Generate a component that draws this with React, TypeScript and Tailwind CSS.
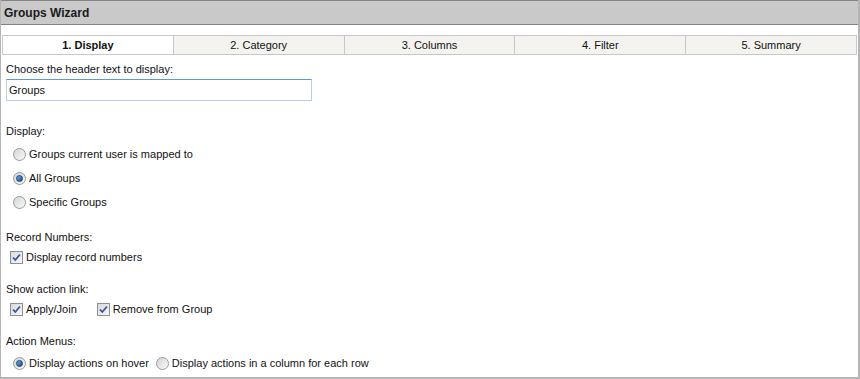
import React from "react"

const tabs = ["1. Display", "2. Category", "3. Columns", "4. Filter", "5. Summary"]

function Radio({ checked = false }: { checked?: boolean }) {
  return (
    <span className="relative inline-flex items-center justify-center w-[13px] h-[13px] rounded-full border border-[#9a9a9a] bg-gradient-to-br from-[#d4d4d4] to-[#fafafa] shrink-0">
      {checked && (
        <span className="w-[7px] h-[7px] rounded-full border border-[#1b3f73] bg-gradient-to-br from-[#6fb0e8] to-[#0d4f94]" />
      )}
    </span>
  )
}

function Check({ checked = true }: { checked?: boolean }) {
  return (
    <span className="inline-flex items-center justify-center w-[13px] h-[13px] border border-[#8e8f8f] bg-gradient-to-br from-[#d9d9d9] to-[#f7f7f7] shrink-0">
      {checked && (
        <svg width="9" height="9" viewBox="0 0 9 9">
          <path d="M1 4.5 L3.3 7 L8 1.5" fill="none" stroke="#3a55a5" strokeWidth="1.8" />
        </svg>
      )}
    </span>
  )
}

export default function App() {
  return (
    <div
      className="w-[860px] h-[379px] bg-white border-l border-r-2 border-b-2 border-[#b5b5b5] text-[11px] text-[#111] leading-[14px]"
      style={{ fontFamily: "'Liberation Sans', Arial, sans-serif" }}
    >
      {/* header */}
      <div className="h-[25px] bg-[#c9c9c9] border-t border-b border-[#858585] flex items-center px-[3px]">
        <span className="font-bold text-[12px] text-[#1a1a1a]">Groups Wizard</span>
      </div>

      {/* tabs */}
      <div className="mt-[10px] ml-[1px] mr-[1px] flex h-[20px] border border-[#c8c8c8]">
        {tabs.map((t, i) => (
          <div
            key={t}
            className={
              "flex-1 flex items-center justify-center " +
              (i > 0 ? "border-l border-[#c8c8c8] " : "") +
              (i === 0 ? "bg-white font-bold" : "bg-[#f4f3ef]")
            }
          >
            {t}
          </div>
        ))}
      </div>

      <div className="px-[5px]">
        <div className="mt-[7px]">Choose the header text to display:</div>
        <div className="mt-[3px] w-[306px] h-[22px] border border-[#b5cfe7] border-t-[#5b9ad3] flex items-center px-[2px]">
          Groups
        </div>

        <div className="mt-[23px]">Display:</div>
        <div className="mt-[4px] pl-[7px]">
          <div className="h-[24px] flex items-center gap-[3px]">
            <Radio /> <span>Groups current user is mapped to</span>
          </div>
          <div className="h-[24px] flex items-center gap-[3px]">
            <Radio checked /> <span>All Groups</span>
          </div>
          <div className="h-[24px] flex items-center gap-[3px]">
            <Radio /> <span>Specific Groups</span>
          </div>
        </div>

        <div className="mt-[16px]">Record Numbers:</div>
        <div className="mt-[3px] h-[20px] flex items-center gap-[3px] pl-[4px]">
          <Check /> <span>Display record numbers</span>
        </div>

        <div className="mt-[15px]">Show action link:</div>
        <div className="mt-[3px] h-[20px] flex items-center pl-[4px]">
          <Check />
          <span className="ml-[3px]">Apply/Join</span>
          <span className="ml-[20px] flex"><Check /></span>
          <span className="ml-[3px]">Remove from Group</span>
        </div>

        <div className="mt-[15px]">Action Menus:</div>
        <div className="mt-[5px] h-[20px] flex items-center pl-[7px]">
          <Radio checked />
          <span className="ml-[3px]">Display actions on hover</span>
          <span className="ml-[7px] flex"><Radio /></span>
          <span className="ml-[3px]">Display actions in a column for each row</span>
        </div>
      </div>
    </div>
  )
}
